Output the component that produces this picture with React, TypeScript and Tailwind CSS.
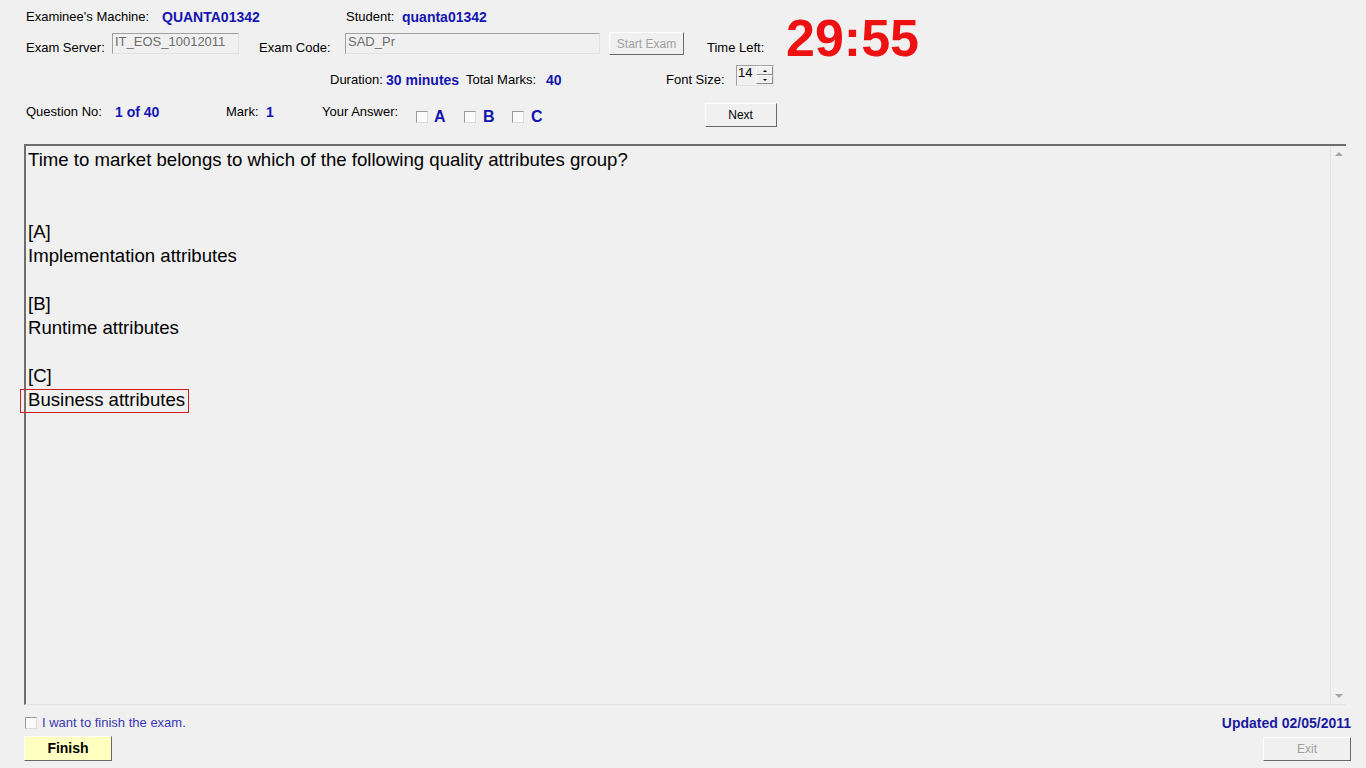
import React from "react";

const blue = "text-[#1515b0]";

function Sunken({ w, children }: { w: string; children?: React.ReactNode }) {
  return (
    <div
      className={`${w} h-[21px] border border-t-[#a0a0a0] border-l-[#a0a0a0] border-r-[#e3e3e3] border-b-[#e3e3e3] bg-[#f0f0f0] px-[2px] text-[13px] leading-[16px] text-[#6d6d6d]`}
    >
      {children}
    </div>
  );
}

function Button({
  w,
  h,
  disabled,
  className = "",
  children,
}: {
  w: string;
  h: string;
  disabled?: boolean;
  className?: string;
  children: React.ReactNode;
}) {
  return (
    <div
      className={`${w} ${h} flex items-center justify-center border border-t-white border-l-white border-r-[#696969] border-b-[#696969] ${
        disabled ? "text-[#a0a0a0]" : "text-black"
      } ${className}`}
    >
      {children}
    </div>
  );
}

function Check() {
  return (
    <div className="h-[12px] w-[12px] shrink-0 border border-t-[#9a9a9a] border-l-[#9a9a9a] border-r-[#dcdcdc] border-b-[#dcdcdc] bg-[#fbfbfb]" />
  );
}

export default function App() {
  const lines: { text: string; box?: boolean }[] = [
    { text: "Time to market belongs to which of the following quality attributes group?" },
    { text: "" },
    { text: "" },
    { text: "[A]" },
    { text: "Implementation attributes" },
    { text: "" },
    { text: "[B]" },
    { text: "Runtime attributes" },
    { text: "" },
    { text: "[C]" },
    { text: "Business attributes", box: true },
  ];

  return (
    <div className="h-[768px] w-full overflow-hidden bg-[#f0f0f0] font-['Liberation_Sans',Arial,sans-serif] text-[13px] text-black">
      {/* header */}
      <div className="flex">
        <div className="w-[786px] shrink-0">
          {/* row 1 */}
          <div className="mt-[9px] flex h-[16px] items-center pl-[26px] leading-[16px]">
            <span className="w-[136px]">Examinee's Machine:</span>
            <span className={`w-[184px] text-[14px] font-bold ${blue}`}>QUANTA01342</span>
            <span className="w-[56px]">Student:</span>
            <span className={`text-[14px] font-bold ${blue}`}>quanta01342</span>
          </div>
          {/* row 2 */}
          <div className="mt-[7px] flex h-[23px] items-start pl-[26px] leading-[16px]">
            <span className="mt-[8px] w-[86px]">Exam Server:</span>
            <div className="mt-[1px]">
              <Sunken w="w-[127px]">IT_EOS_10012011</Sunken>
            </div>
            <span className="ml-[20px] mt-[8px] w-[86px]">Exam Code:</span>
            <div className="mt-[1px]">
              <Sunken w="w-[255px]">SAD_Pr</Sunken>
            </div>
            <Button w="w-[75px]" h="h-[23px]" disabled className="ml-[9px] text-[12px]">
              Start Exam
            </Button>
            <span className="ml-[23px] mt-[8px]">Time Left:</span>
          </div>
          {/* row 3 */}
          <div className="mt-[9px] flex h-[24px] items-start pl-[330px] leading-[16px]">
            <span className="mt-[8px] w-[56px]">Duration:</span>
            <span className={`mt-[8px] w-[80px] text-[14px] font-bold ${blue}`}>30 minutes</span>
            <span className="mt-[8px] w-[80px]">Total Marks:</span>
            <span className={`mt-[8px] w-[120px] text-[14px] font-bold ${blue}`}>40</span>
            <span className="mt-[8px] w-[70px]">Font Size:</span>
            <div className="mt-[1px] flex h-[21px] w-[38px] border border-t-[#a0a0a0] border-l-[#a0a0a0] border-r-[#e3e3e3] border-b-[#e3e3e3] bg-[#f0f0f0]">
              <span className="flex-1 pl-[1px] text-[13px] leading-[14px]">14</span>
              <div className="flex w-[17px] flex-col">
                <div className="flex h-[9px] items-center justify-center border border-t-white border-l-white border-r-[#8a8a8a] border-b-[#8a8a8a]">
                  <div className="h-0 w-0 border-x-[2px] border-b-[2px] border-x-transparent border-b-black" />
                </div>
                <div className="flex h-[9px] items-center justify-center border border-t-white border-l-white border-r-[#8a8a8a] border-b-[#8a8a8a]">
                  <div className="h-0 w-0 border-x-[2px] border-t-[2px] border-x-transparent border-t-black" />
                </div>
              </div>
            </div>
          </div>
        </div>
        <div className="mt-[12px] text-[52px] font-bold leading-[52px] text-[#ee1111]">
          29:55
        </div>
      </div>

      {/* row 4 */}
      <div className="mt-[14px] flex h-[25px] items-start pl-[26px] leading-[16px]">
        <span className="mt-[2px] w-[89px]">Question No:</span>
        <span className={`mt-[2px] w-[111px] text-[14px] font-bold ${blue}`}>1 of 40</span>
        <span className="mt-[2px] w-[40px]">Mark:</span>
        <span className={`mt-[2px] w-[56px] text-[14px] font-bold ${blue}`}>1</span>
        <span className="mt-[2px] w-[94px]">Your Answer:</span>
        <div className="mt-[6px] flex items-center">
          <Check />
          <span className={`ml-[6px] w-[30px] text-[16px] font-bold leading-[18px] ${blue}`}>A</span>
          <Check />
          <span className={`ml-[7px] w-[29px] text-[16px] font-bold leading-[18px] ${blue}`}>B</span>
          <Check />
          <span className={`ml-[7px] text-[16px] font-bold leading-[18px] ${blue}`}>C</span>
        </div>
        <Button w="w-[72px]" h="h-[24px]" className="ml-[162px] mt-[1px] text-[12px]">
          Next
        </Button>
      </div>

      {/* content */}
      <div className="ml-[24px] mt-[17px] flex h-[561px] w-[1322px] border-t-2 border-l-2 border-b border-t-[#6e6e6e] border-l-[#6e6e6e] border-b-[#e3e3e3] bg-[#f0f0f0]">
        <div className="flex-1 pl-[2px] pt-[2px] text-[18.6px] leading-[24px]">
          {lines.map((l, i) => (
            <div key={i} className="relative h-[24px]">
              {l.text}
              {l.box && (
                <div className="absolute left-[-8px] top-[1px] h-[24px] w-[169px] border border-[#d21c1c]" />
              )}
            </div>
          ))}
        </div>
        <div className="flex w-[16px] flex-col items-center justify-between border-l border-l-[#e4e4e4] py-[6px]">
          <div className="h-0 w-0 border-x-[4px] border-b-[4px] border-x-transparent border-b-[#a6a6a6]" />
          <div className="h-0 w-0 border-x-[4px] border-t-[4px] border-x-transparent border-t-[#a6a6a6]" />
        </div>
      </div>

      {/* bottom */}
      <div className="mt-[10px] flex h-[16px] items-center pl-[25px] pr-[15px] leading-[16px]">
        <Check />
        <span className="ml-[5px] text-[#3838b0]">I want to finish the exam.</span>
        <span className="ml-auto text-[14px] font-bold text-[#1a1aa0]">Updated 02/05/2011</span>
      </div>
      <div className="mt-[5px] flex pl-[24px] pr-[15px]">
        <Button
          w="w-[88px]"
          h="h-[25px]"
          className="border-t-[#ffffe8] border-l-[#ffffe8] border-r-[#404040] border-b-[#404040] bg-[#ffffc0] text-[14px] font-bold"
        >
          Finish
        </Button>
        <Button w="w-[88px]" h="h-[24px]" disabled className="ml-auto mt-[1px] text-[12px]">
          Exit
        </Button>
      </div>
    </div>
  );
}
